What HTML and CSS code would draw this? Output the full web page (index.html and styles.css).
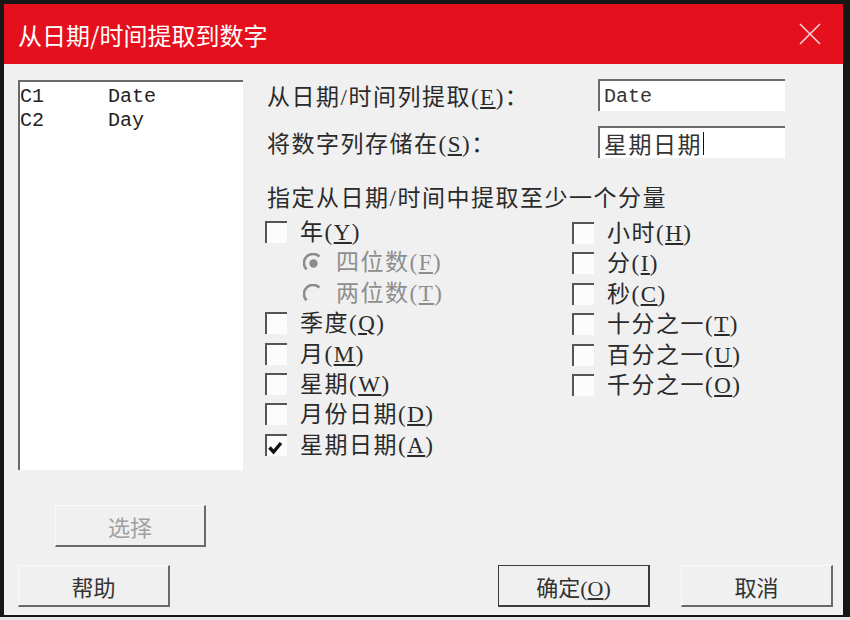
FILE: index.html
```html
<!DOCTYPE html>
<html lang="zh-CN">
  <head>
    <meta charset="UTF-8" />
    <meta name="viewport" content="width=device-width, initial-scale=1.0" />
    <title>从日期/时间提取到数字</title>
    <link rel="stylesheet" href="styles.css">
  </head>
  <body>
    <div class="frame">
      <div class="window">
        <header class="titlebar">
          <span class="title">从日期/时间提取到数字</span>
          <svg class="close" width="22" height="22" viewBox="0 0 22 22">
            <path d="M1 1 L21 21 M21 1 L1 21" stroke="#f7d4d6" stroke-width="1.6" fill="none" />
          </svg>
        </header>

        <div class="body">
          <div class="main">
            <div class="left">
              <div class="list">
                <div class="list-row"><span class="col-id">C1</span><span>Date</span></div>
                <div class="list-row"><span class="col-id">C2</span><span>Day</span></div>
              </div>
              <button class="btn btn-select" disabled>选择</button>
            </div>

            <div class="right">
              <div class="field">
                <label class="field-label">从日期/时间列提取(<u>E</u>)：</label>
                <div class="input mono">Date</div>
              </div>
              <div class="field field-2">
                <label class="field-label">将数字列存储在(<u>S</u>)：</label>
                <div class="input">星期日期<span class="caret"></span></div>
              </div>

              <div class="group-title">指定从日期/时间中提取至少一个分量</div>

              <div class="options">
                <div class="opt-col">
                  <div class="opt"><span class="box"></span>年(<u>Y</u>)</div>
                  <div class="opt sub disabled">
                    <svg class="radio" width="20" height="20" viewBox="0 0 20 20">
                      <path d="M16.4 3.6 A9 9 0 0 0 3.6 16.4" stroke="#8c8c8c" stroke-width="2.6" fill="none" />
                      <circle cx="10.5" cy="10.5" r="4.2" fill="#8c8c8c" />
                    </svg>四位数(<u>F</u>)
                  </div>
                  <div class="opt sub disabled">
                    <svg class="radio" width="20" height="20" viewBox="0 0 20 20">
                      <path d="M16.4 3.6 A9 9 0 0 0 3.6 16.4" stroke="#8c8c8c" stroke-width="2.6" fill="none" />
                    </svg>两位数(<u>T</u>)
                  </div>
                  <div class="opt"><span class="box"></span>季度(<u>Q</u>)</div>
                  <div class="opt"><span class="box"></span>月(<u>M</u>)</div>
                  <div class="opt"><span class="box"></span>星期(<u>W</u>)</div>
                  <div class="opt"><span class="box"></span>月份日期(<u>D</u>)</div>
                  <div class="opt">
                    <span class="box">
                      <svg width="20" height="20" viewBox="0 0 20 20">
                        <path d="M2.5 10.5 L6.5 15 L14 6" stroke="#111" stroke-width="3.4" fill="none" />
                      </svg>
                    </span>星期日期(<u>A</u>)
                  </div>
                </div>
                <div class="opt-col opt-col-2">
                  <div class="opt"><span class="box"></span>小时(<u>H</u>)</div>
                  <div class="opt"><span class="box"></span>分(<u>I</u>)</div>
                  <div class="opt"><span class="box"></span>秒(<u>C</u>)</div>
                  <div class="opt"><span class="box"></span>十分之一(<u>T</u>)</div>
                  <div class="opt"><span class="box"></span>百分之一(<u>U</u>)</div>
                  <div class="opt"><span class="box"></span>千分之一(<u>O</u>)</div>
                </div>
              </div>
            </div>
          </div>

          <div class="footer">
            <button class="btn">帮助</button>
            <div class="footer-right">
              <button class="btn btn-default">确定(<u>O</u>)</button>
              <button class="btn">取消</button>
            </div>
          </div>
        </div>
      </div>
    </div>
  </body>
</html>
```

FILE: styles.css
```css
html,
body {
  margin: 0;
  padding: 0;
  background: #e6e6e6;
}
body {
  font-family: "Liberation Serif", "Noto Sans CJK SC", serif;
  color: #2a2a2a;
}
.frame {
  width: 850px;
  box-sizing: border-box;
  padding: 4px 7px 2px 4px;
  background: #161616;
}
.window {
  width: 839px;
  height: 611px;
  display: flex;
  flex-direction: column;
  background: #f0f0f0;
}

/* title bar */
.titlebar {
  height: 60px;
  flex: none;
  display: flex;
  align-items: center;
  justify-content: space-between;
  padding: 0 22px 0 14px;
  background: #e5101d;
}
.title {
  font-family: "Noto Sans CJK SC", sans-serif;
  font-size: 24px;
  color: #fff;
}
.close {
  display: block;
}

/* body */
.body {
  flex: 1;
  display: flex;
  flex-direction: column;
  padding: 16px 10px 8px 14px;
}
.main {
  display: flex;
}
.left {
  width: 225px;
  flex: none;
  display: flex;
  flex-direction: column;
}
.list {
  height: 390px;
  box-sizing: border-box;
  background: #fff;
  border-top: 2px solid #6a6a6a;
  border-left: 2px solid #6a6a6a;
  padding-top: 3px;
  font-family: "Liberation Mono", monospace;
  font-size: 20px;
  line-height: 24px;
  color: #222;
}
.list-row {
  display: flex;
}
.col-id {
  width: 88px;
}

/* buttons */
.btn {
  width: 152px;
  height: 42px;
  box-sizing: border-box;
  background: #f0f0f0;
  border: none;
  border-top: 1px solid #fafafa;
  border-left: 1px solid #fafafa;
  border-right: 2px solid #6a6a6a;
  border-bottom: 2px solid #6a6a6a;
  font-family: "Liberation Serif", "Noto Sans CJK SC", serif;
  font-size: 22px;
  color: #333;
  padding: 0;
}
.btn-select {
  margin-top: 35px;
  margin-left: 37px;
  width: 151px;
  color: #a0a0a0;
}
.btn-default {
  border: 1.5px solid #3c3c3c;
  border-right-width: 2px;
  border-bottom-width: 2.5px;
}

/* right panel */
.right {
  margin-left: 24px;
  flex: 1;
  font-size: 23px;
  letter-spacing: 1.5px;
}
.field {
  display: flex;
  align-items: center;
  margin-top: -2px;
}
.field-2 {
  margin-top: 13px;
}
.field-label {
  width: 331px;
  flex: none;
}
.input {
  width: 187px;
  height: 32px;
  box-sizing: border-box;
  background: #fff;
  border-top: 2px solid #6a6a6a;
  border-left: 2px solid #6a6a6a;
  display: flex;
  align-items: center;
  padding-left: 4px;
  font-size: 23px;
  color: #333;
}
.mono {
  font-family: "Liberation Mono", monospace;
  font-size: 20px;
  letter-spacing: 0;
}
.caret {
  width: 1px;
  height: 23px;
  margin-left: 1px;
  background: #111;
}
.group-title {
  margin-top: 24px;
  height: 32px;
  line-height: 32px;
}

/* option columns */
.options {
  display: flex;
  margin-top: 6px;
  margin-left: -2px;
}
.opt-col {
  width: 307px;
  display: flex;
  flex-direction: column;
}
.opt-col-2 {
  padding-top: 1px;
}
.opt {
  height: 30.4px;
  display: flex;
  align-items: flex-start;
  line-height: 24px;
}
.box {
  width: 22px;
  height: 22px;
  flex: none;
  box-sizing: border-box;
  margin-right: 13px;
  background: #fcfcfc;
  border-top: 2px solid #555;
  border-left: 2px solid #555;
}
.box svg {
  display: block;
  margin-top: 1px;
}
.sub {
  padding-left: 38px;
}
.radio {
  margin: 2px 13px 0 0;
  flex: none;
}
.disabled {
  color: #8e8e8e;
}

/* footer */
.footer {
  margin-top: auto;
  display: flex;
  justify-content: space-between;
  align-items: flex-end;
}
.footer-right {
  display: flex;
  gap: 31px;
}
```
